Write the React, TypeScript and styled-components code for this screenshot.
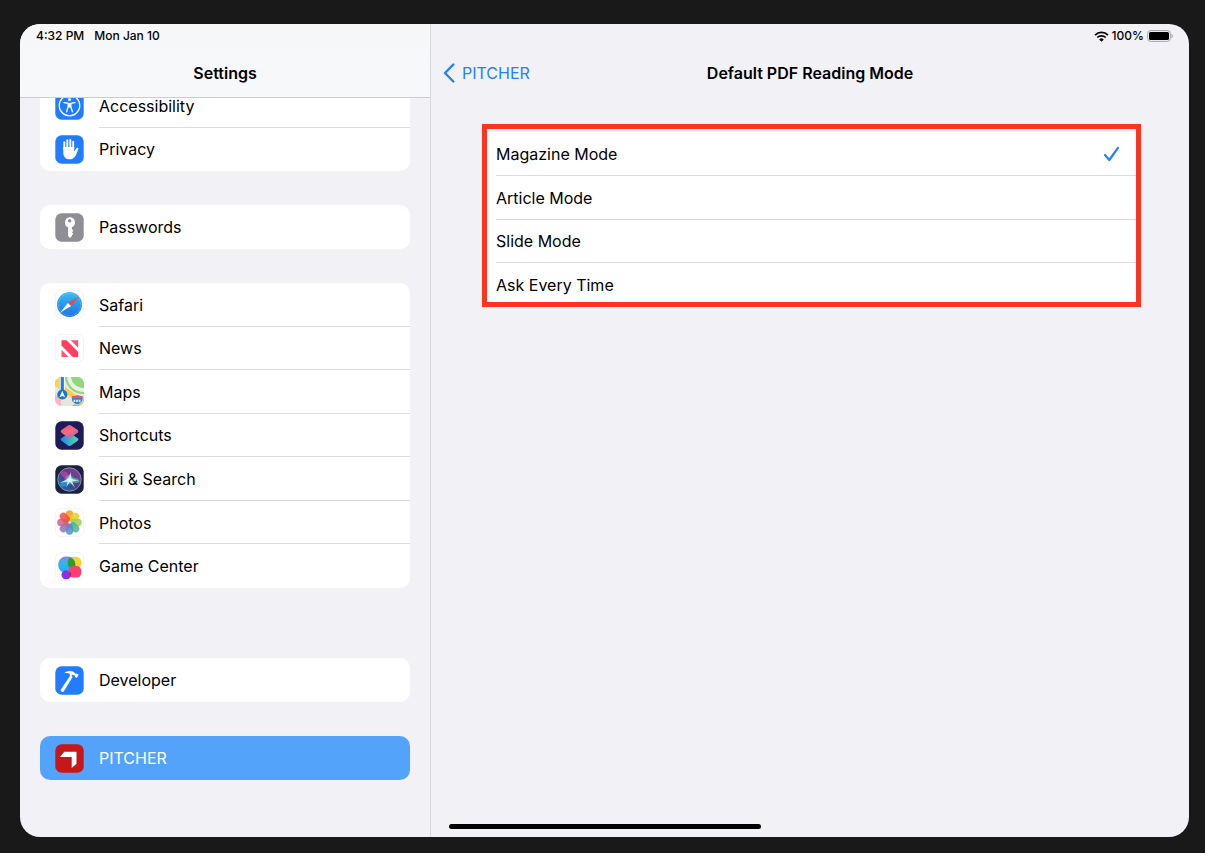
import React, { useState } from "react";
import styled, { createGlobalStyle } from "styled-components";

const GlobalStyle = createGlobalStyle`
  *, *::before, *::after { box-sizing: border-box; }
  body {
    margin: 0;
    background: #191919;
    color: #000;
    font: 16px/20px Inter, "Liberation Sans", sans-serif;
  }
  button { font: inherit; color: inherit; }
`;

const Device = styled.div`
  min-height: 100vh;
  padding: 24px 16px 16px 20px;
  display: flex;
`;

const Screen = styled.div`
  position: relative;
  flex: 1;
  display: flex;
  background: #f2f1f6;
  border-radius: 20px;
  overflow: hidden;
`;

const Sidebar = styled.aside`
  position: relative;
  flex: 0 0 411px;
  border-right: 1px solid #d9d8dd;
`;

const SidebarHeader = styled.header`
  position: absolute;
  top: 0;
  left: 0;
  right: 0;
  background: linear-gradient(#f7f7f8, #f6f8f9);
  border-bottom: 1px solid #cdcdd0;
`;

const StatusBar = styled.div<{ $end?: boolean }>`
  height: 24px;
  padding: 0 16px;
  display: flex;
  align-items: center;
  justify-content: ${(p) => (p.$end ? "flex-end" : "flex-start")};
  gap: ${(p) => (p.$end ? 3 : 10)}px;
  font-size: 12px;
  line-height: 16px;
  font-weight: 500;
`;

const NavBar = styled.div`
  height: 49px;
  padding: 0 12px;
  display: grid;
  grid-template-columns: 1fr auto 1fr;
  align-items: center;
`;

const Title = styled.h1`
  grid-column: 2;
  margin: 0;
  font-size: 16px;
  line-height: 20px;
  font-weight: 600;
`;

const Groups = styled.nav`
  padding: 60px 20px 56px;
  display: flex;
  flex-direction: column;
  gap: 34px;
`;

const Group = styled.div<{ $height: number; $spaced?: boolean }>`
  min-height: ${(p) => p.$height}px;
  margin-top: ${(p) => (p.$spaced ? 36 : 0)}px;
  display: grid;
  grid-auto-rows: 1fr;
  background: #fff;
  border-radius: 10px;
  overflow: hidden;
`;

const Row = styled.button<{ $selected?: boolean }>`
  padding: 0 0 0 15px;
  display: flex;
  align-items: center;
  gap: 15px;
  border: 0;
  text-align: left;
  background: ${(p) => (p.$selected ? "#54a3fb" : "transparent")};
  color: ${(p) => (p.$selected ? "#fff" : "#000")};
`;

const RowLabel = styled.span`
  flex: 1;
  align-self: stretch;
  display: flex;
  align-items: center;
  box-shadow: inset 0 -1px #dcdcde;
  ${Row}:last-child & { box-shadow: none; }
`;

const Icon = styled.svg`
  flex: none;
  width: 29px;
  height: 29px;
  display: block;
`;

const Detail = styled.main`
  flex: 1;
  min-width: 0;
`;

const BackButton = styled.button`
  justify-self: start;
  padding: 0;
  display: flex;
  align-items: center;
  gap: 7px;
  border: 0;
  background: none;
  color: #2680f8;
`;

const Highlight = styled.section`
  height: 183px;
  margin: 27px 48px 0 51px;
  padding-top: 3px;
  border: 5px solid #fc3420;
  overflow: hidden;
`;

const Options = styled.div`
  min-height: 175px;
  padding-left: 9px;
  display: grid;
  grid-auto-rows: 1fr;
  background: #fff;
  border-top-right-radius: 3px;
`;

const Option = styled.label`
  position: relative;
  padding-right: 16px;
  display: flex;
  align-items: center;
  justify-content: space-between;
  box-shadow: inset 0 -1px #dcdcde;
`;

const OptionInput = styled.input`
  position: absolute;
  inset: 0;
  margin: 0;
  appearance: none;
`;

const HomeIndicator = styled.div`
  position: absolute;
  left: 50%;
  bottom: 8px;
  width: 312px;
  height: 5px;
  transform: translateX(-50%);
  border-radius: 3px;
  background: #000;
`;

type Tile = { fill?: string; children: React.ReactNode };

const AppIcon = ({ fill = "#fff", children }: Tile) => (
  <Icon viewBox="0 0 29 29" aria-hidden="true">
    <rect x="0.3" y="0.3" width="28.4" height="28.4" rx="6.3" fill={fill} stroke={fill === "#fff" ? "#ececee" : "none"} strokeWidth="0.7" />
    {children}
  </Icon>
);

const AccessibilityIcon = () => (
  <AppIcon fill="#227dfe">
    <circle cx="14.5" cy="14.5" r="10.3" fill="none" stroke="#fff" strokeWidth="1.2" />
    <circle cx="14.5" cy="8.6" r="1.5" fill="#fff" />
    <path d="M9 11.6l4.2.8v3.2l-1.6 5.2M20 11.6l-4.2.8v3.2l1.6 5.2" fill="none" stroke="#fff" strokeWidth="1.3" strokeLinecap="round" />
    <path d="M12.9 11.9h3.2v4.6h-3.2z" fill="#fff" />
  </AppIcon>
);

const PrivacyIcon = () => (
  <AppIcon fill="#227dfe">
    <path d="M9.3 14V7.2M12.3 13V5.2M15.3 13V5M18.2 14V6.7" stroke="#fff" strokeWidth="1.9" strokeLinecap="round" />
    <path d="M8.3 12h10.9v4.3c.8-.6 1.4-1.8 2-2.9.4-.7 1-.9 1.7-.6.6.3.5.8.3 1.4-1 2.8-1.8 5.5-3.4 7.5-1.3 1.7-3 2.6-5.1 2.600-4.100 0-6.400-2.600-6.400-6.900z" fill="#fff" />
  </AppIcon>
);

const PasswordsIcon = () => (
  <AppIcon fill="#8f8e94">
    <path fillRule="evenodd" fill="#fff" d="M14.700 4.200a5.300 5.300 0 0 1 2.200 10.100v1.900l1.500 1.500-1.500 1.600 1.400 1.500-1.400 1.400v.8l-1.900 2-1.900-2v-8.700A5.300 5.300 0 0 1 14.700 4.200zm0 1.900a1.700 1.700 0 1 0 0 3.400 1.700 1.700 0 0 0 0-3.400z" />
  </AppIcon>
);

const SafariIcon = () => (
  <AppIcon>
    <defs>
      <linearGradient id="safari" x2="0" y2="1">
        <stop stopColor="#35bdf5" />
        <stop offset="1" stopColor="#1c71e5" />
      </linearGradient>
    </defs>
    <circle cx="14.5" cy="14.5" r="12.5" fill="url(#safari)" />
    <circle cx="14.5" cy="14.5" r="11" fill="none" stroke="#9fd6fb" strokeWidth="1" strokeDasharray="0.5 1" />
    <path d="M24 6.200L12.900 12.900l3.200 3.200z" fill="#f2453e" />
    <path d="M5 22.800L12.900 12.900l3.200 3.200z" fill="#fff" />
  </AppIcon>
);

const NewsIcon = () => (
  <AppIcon>
    <path d="M6.500 6.300h5L23.200 18v4.900h-5.400L6.500 11.600z" fill="#fb3f5f" />
    <path d="M15.700 6.300h7.500v7.500zM6.500 15.700v7.200h7.200z" fill="#fb5570" />
  </AppIcon>
);

const MapsIcon = () => (
  <Icon viewBox="0 0 29 29" aria-hidden="true">
    <defs>
      <clipPath id="maps"><rect width="29" height="29" rx="6.5" /></clipPath>
    </defs>
    <g clipPath="url(#maps)">
      <path fill="#e9e6dc" d="M0 0h29v29H0z" />
      <path fill="#8dd878" d="M10 0h19v17C18 17 11 10 10 0z" />
      <path d="M14 0c1 8 7 13 15 13" fill="none" stroke="#eaf2df" strokeWidth="4" />
      <path fill="#f7b6c6" d="M0 17l6 6v6H0z" />
      <path fill="#86d46f" d="M17 29l12-9v9z" />
      <path d="M-1 5L29 27" stroke="#fbce3d" strokeWidth="5" />
      <path fill="#fbd24a" d="M0 0h5v12L0 8z" />
      <path d="M7.3 0v15" stroke="#fff" strokeWidth="5" />
      <path d="M7.3 0v15" stroke="#1f80df" strokeWidth="3.2" />
      <circle cx="7.3" cy="17.5" r="5.1" fill="#1975d8" />
      <path d="M7.3 13.8l2.8 6.4-2.8-1.2-2.8 1.2z" fill="#fff" />
      <path d="M17 19c2 .5 3-.8 5.2-.8s3.300 1.300 5.300.8c1.700 4.500-.8 7.500-5.300 8.800-4.500-1.300-7-4.300-5.200-8.800z" fill="#3f7fd8" stroke="#fff" strokeWidth=".6" />
      <path d="M17 19c2 .5 3-.8 5.200-.8s3.300 1.300 5.300.8l.3 2H16.700z" fill="#e6585d" />
      <path d="M18.500 23.800h7.500" stroke="#dfeafa" strokeWidth="2.200" strokeDasharray="1.800 .8" />
    </g>
  </Icon>
);

const ShortcutsIcon = () => (
  <AppIcon fill="#1c1d57">
    <defs>
      <linearGradient id="scTop" x1=".2" x2=".8" y2="1">
        <stop stopColor="#ee4f8d" />
        <stop offset=".5" stopColor="#f46d7c" />
        <stop offset="1" stopColor="#9c68bd" />
      </linearGradient>
      <linearGradient id="scBottom" x2="1" y2="0">
        <stop stopColor="#2b7df0" />
        <stop offset="1" stopColor="#52dca5" />
      </linearGradient>
    </defs>
    <path d="M13 12.700q1.500-.9 3 0l6.600 4.500q1.600 1.300 0 2.600L16 24.600q-1.500 1-3 0l-6.600-4.800q-1.600-1.300 0-2.600z" fill="url(#scBottom)" />
    <path d="M13 4.400q1.500-.9 3 0l6.600 4.700q1.600 1.300 0 2.600L16 16.400q-1.500 1-3 0l-6.600-4.700q-1.600-1.300 0-2.600z" fill="url(#scTop)" />
  </AppIcon>
);

const SiriIcon = () => (
  <AppIcon fill="#1c2142">
    <defs>
      <linearGradient id="siri" x1="0" y1="1" x2="1" y2="0">
        <stop stopColor="#1687c4" />
        <stop offset=".45" stopColor="#3f3f86" />
        <stop offset="1" stopColor="#a83a8c" />
      </linearGradient>
      <radialGradient id="siriGlow">
        <stop stopColor="#fff" />
        <stop offset=".35" stopColor="#a8f4f0" stopOpacity=".7" />
        <stop offset="1" stopColor="#56b9df" stopOpacity="0" />
      </radialGradient>
    </defs>
    <circle cx="14.5" cy="14.5" r="11.7" fill="url(#siri)" stroke="#8296b2" strokeWidth=".9" />
    <path d="M14.500 14.500C8 13 4.500 10 6 7c4-2.500 8 1 8.500 7.500z" fill="#d43fa0" opacity=".7" />
    <path d="M14.500 14.500C21 11 24.500 14 24.500 17c-3 2-8 1-10-2.500z" fill="#31cfa8" opacity=".7" />
    <path d="M14.500 14.500C10 16 6 18 5 19.500c2 3.500 7 3 9.500-5z" fill="#20b4dc" opacity=".6" />
    <circle cx="14.500" cy="14.800" r="6" fill="url(#siriGlow)" />
    <path d="M4.500 18l9-4.500 2-6.500 1 7 7.500 1.500-7 .8 3 6.700-5.200-6.300-3.600 5.800 1.500-6z" fill="#e1fffc" opacity=".8" />
  </AppIcon>
);

const PETALS = ["#f89b27", "#e4d323", "#9fce58", "#4db787", "#4f91cf", "#8c75bd", "#ca6294", "#ee5143"];

const PhotosIcon = () => (
  <AppIcon>
    {PETALS.map((color, i) => (
      <rect key={color} x="10.8" y="2.2" width="7.4" height="11.2" rx="3.7" fill={color} opacity=".86" transform={`rotate(${i * 45} 14.5 14.5)`} />
    ))}
  </AppIcon>
);

const GameCenterIcon = () => (
  <AppIcon>
    <defs>
      <linearGradient id="gcBlue" x2="0" y2="1">
        <stop stopColor="#8b83e8" />
        <stop offset=".4" stopColor="#36b3ee" />
        <stop offset="1" stopColor="#1aaef5" />
      </linearGradient>
    </defs>
    <rect x="13" y="4.8" width="13.5" height="11.5" rx="5.4" fill="#fbd12a" />
    <rect x="3.3" y="4.5" width="17" height="16.5" rx="7.6" fill="url(#gcBlue)" />
    <path d="M14.800 5.500c4.500 1.500 6.300 4.800 5.200 10.200-2 1.400-5.200.8-6.600-1.500-1.300-3-.8-6.500 1.400-8.700z" fill="#2f9b35" />
    <rect x="6.5" y="18.5" width="9.5" height="8.7" rx="4.3" fill="#8b2fe8" />
    <rect x="13.6" y="14" width="12.8" height="11.6" rx="5" fill="#fb3f72" />
    <path d="M14.500 19.500c1.500 1 2 3 1.200 5.200-1.500-1.200-2-3.200-1.200-5.200z" fill="#b0175f" />
  </AppIcon>
);

const DeveloperIcon = () => (
  <AppIcon fill="#227dfe">
    <path d="M15.300 9.500l2.400 1.200-8.800 14.600q-.9 1.200-2.300.4t-.7-2.100z" fill="#fff" />
    <path d="M9.200 7.300C11.500 5 15 4.400 18 5.600l2.700 2.100 1.400 0 1.500 1.100-1.900 3.200-1.700-.9-.2-1.600-2.600-.7-.9 1.400-1.900-.9.600-1.500c-1.900-.8-3.800-.9-5.800-.5z" fill="#fff" />
  </AppIcon>
);

const PitcherIcon = () => (
  <AppIcon fill="#c81719">
    <path d="M9.3 7.8h12.2v11.900L16.700 24V12.900H5z" fill="#fff" />
  </AppIcon>
);

type Entry = { label: string; icon: React.ReactNode };
type Section = { height: number; spaced?: boolean; rows: Entry[] };

const SECTIONS: Section[] = [
  {
    height: 87,
    rows: [
      { label: "Accessibility", icon: <AccessibilityIcon /> },
      { label: "Privacy", icon: <PrivacyIcon /> },
    ],
  },
  { height: 44, rows: [{ label: "Passwords", icon: <PasswordsIcon /> }] },
  {
    height: 305,
    rows: [
      { label: "Safari", icon: <SafariIcon /> },
      { label: "News", icon: <NewsIcon /> },
      { label: "Maps", icon: <MapsIcon /> },
      { label: "Shortcuts", icon: <ShortcutsIcon /> },
      { label: "Siri & Search", icon: <SiriIcon /> },
      { label: "Photos", icon: <PhotosIcon /> },
      { label: "Game Center", icon: <GameCenterIcon /> },
    ],
  },
  { height: 44, spaced: true, rows: [{ label: "Developer", icon: <DeveloperIcon /> }] },
  { height: 44, rows: [{ label: "PITCHER", icon: <PitcherIcon /> }] },
];

const MODES = ["Magazine Mode", "Article Mode", "Slide Mode", "Ask Every Time"];

export default function App() {
  const [section, setSection] = useState("PITCHER");
  const [mode, setMode] = useState(MODES[0]);

  return (
    <>
      <GlobalStyle />
      <Device>
        <Screen>
          <Sidebar>
            <Groups aria-label="Settings">
              {SECTIONS.map((group) => (
                <Group key={group.rows[0].label} $height={group.height} $spaced={group.spaced}>
                  {group.rows.map(({ label, icon }) => (
                    <Row key={label} type="button" $selected={label === section} onClick={() => setSection(label)}>
                      {icon}
                      <RowLabel>{label}</RowLabel>
                    </Row>
                  ))}
                </Group>
              ))}
            </Groups>
            <SidebarHeader>
              <StatusBar>
                <span>4:32 PM</span>
                <span>Mon Jan 10</span>
              </StatusBar>
              <NavBar>
                <Title>Settings</Title>
              </NavBar>
            </SidebarHeader>
          </Sidebar>
          <Detail>
            <StatusBar $end>
              <svg width="15" height="11" viewBox="0 0 15 11" aria-hidden="true">
                <path d="M1 4.100a9.300 9.300 0 0 1 13 0M3.300 6.500a6 6 0 0 1 8.400 0" fill="none" stroke="#000" strokeWidth="1.700" />
                <path d="M5.200 8.400a3.300 3.300 0 0 1 4.600 0L7.500 10.800z" />
              </svg>
              <span>100%</span>
              <svg width="26" height="12" viewBox="0 0 26 12" aria-hidden="true">
                <rect x=".6" y=".6" width="22.8" height="10.8" rx="3" fill="none" stroke="#a5a4a8" strokeWidth="1" />
                <rect x="2" y="2" width="20" height="8" rx="1.6" />
                <path d="M24.500 4v4q1.400-.6 1.400-2t-1.400-2z" fill="#a5a4a8" />
              </svg>
            </StatusBar>
            <NavBar>
              <BackButton type="button">
                <svg width="12" height="20" viewBox="0 0 12 20" aria-hidden="true">
                  <path d="M10.300 1.500L2 10l8.300 8.500" fill="none" stroke="#2680f8" strokeWidth="2.400" strokeLinecap="round" strokeLinejoin="round" />
                </svg>
                PITCHER
              </BackButton>
              <Title as="h2">Default PDF Reading Mode</Title>
            </NavBar>
            <Highlight>
              <Options role="radiogroup" aria-label="Default PDF Reading Mode">
                {MODES.map((name) => (
                  <Option key={name}>
                    <OptionInput type="radio" name="mode" checked={mode === name} onChange={() => setMode(name)} />
                    {name}
                    {mode === name && (
                      <svg width="17" height="16" viewBox="0 0 17 16" aria-hidden="true">
                        <path d="M2 9l4.300 5L15 1.800" fill="none" stroke="#2680f8" strokeWidth="2.200" strokeLinecap="round" strokeLinejoin="round" />
                      </svg>
                    )}
                  </Option>
                ))}
              </Options>
            </Highlight>
          </Detail>
          <HomeIndicator />
        </Screen>
      </Device>
    </>
  );
}
